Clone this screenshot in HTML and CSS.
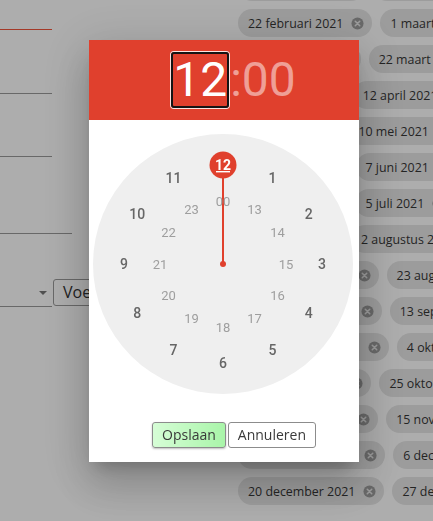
FILE: index.html
```html
<!DOCTYPE html>
<html lang="nl">
<head>
<meta charset="utf-8">
<title>Tijd kiezen</title>
<link rel="stylesheet" href="styles.css">
</head>
<body>
<div class="page">
  <div class="form">
    <div class="field field-focus"></div>
    <div class="field field-2"></div>
    <div class="field field-3"></div>
    <div class="field field-4 wide"></div>
    <div class="select-row">
      <div class="select"><span class="caret"></span></div>
      <button class="add-btn" type="button">Voeg toe</button>
    </div>
  </div>
  <div class="chips">
    <div class="chip-row">
      <span class="chip">1 februari 2021<svg class="x" viewBox="0 0 14 14"><circle cx="7" cy="7" r="6.5"/><path d="M4.6 4.6l4.8 4.8M9.4 4.6l-4.8 4.8"/></svg></span>
      <span class="chip">8 februari 2021<svg class="x" viewBox="0 0 14 14"><circle cx="7" cy="7" r="6.5"/><path d="M4.6 4.6l4.8 4.8M9.4 4.6l-4.8 4.8"/></svg></span>
    </div>
    <div class="chip-row">
      <span class="chip">22 februari 2021<svg class="x" viewBox="0 0 14 14"><circle cx="7" cy="7" r="6.5"/><path d="M4.6 4.6l4.8 4.8M9.4 4.6l-4.8 4.8"/></svg></span>
      <span class="chip">1 maart 2021<svg class="x" viewBox="0 0 14 14"><circle cx="7" cy="7" r="6.5"/><path d="M4.6 4.6l4.8 4.8M9.4 4.6l-4.8 4.8"/></svg></span>
    </div>
    <div class="chip-row">
      <span class="chip">15 maart 2021<svg class="x" viewBox="0 0 14 14"><circle cx="7" cy="7" r="6.5"/><path d="M4.6 4.6l4.8 4.8M9.4 4.6l-4.8 4.8"/></svg></span>
      <span class="chip">22 maart 2021<svg class="x" viewBox="0 0 14 14"><circle cx="7" cy="7" r="6.5"/><path d="M4.6 4.6l4.8 4.8M9.4 4.6l-4.8 4.8"/></svg></span>
    </div>
    <div class="chip-row">
      <span class="chip">5 april 2021<svg class="x" viewBox="0 0 14 14"><circle cx="7" cy="7" r="6.5"/><path d="M4.6 4.6l4.8 4.8M9.4 4.6l-4.8 4.8"/></svg></span>
      <span class="chip">12 april 2021<svg class="x" viewBox="0 0 14 14"><circle cx="7" cy="7" r="6.5"/><path d="M4.6 4.6l4.8 4.8M9.4 4.6l-4.8 4.8"/></svg></span>
    </div>
    <div class="chip-row">
      <span class="chip">3 mei 2021<svg class="x" viewBox="0 0 14 14"><circle cx="7" cy="7" r="6.5"/><path d="M4.6 4.6l4.8 4.8M9.4 4.6l-4.8 4.8"/></svg></span>
      <span class="chip">10 mei 2021<svg class="x" viewBox="0 0 14 14"><circle cx="7" cy="7" r="6.5"/><path d="M4.6 4.6l4.8 4.8M9.4 4.6l-4.8 4.8"/></svg></span>
    </div>
    <div class="chip-row">
      <span class="chip">31 mei 2021<svg class="x" viewBox="0 0 14 14"><circle cx="7" cy="7" r="6.5"/><path d="M4.6 4.6l4.8 4.8M9.4 4.6l-4.8 4.8"/></svg></span>
      <span class="chip">7 juni 2021<svg class="x" viewBox="0 0 14 14"><circle cx="7" cy="7" r="6.5"/><path d="M4.6 4.6l4.8 4.8M9.4 4.6l-4.8 4.8"/></svg></span>
    </div>
    <div class="chip-row">
      <span class="chip">28 juni 2021<svg class="x" viewBox="0 0 14 14"><circle cx="7" cy="7" r="6.5"/><path d="M4.6 4.6l4.8 4.8M9.4 4.6l-4.8 4.8"/></svg></span>
      <span class="chip">5 juli 2021<svg class="x" viewBox="0 0 14 14"><circle cx="7" cy="7" r="6.5"/><path d="M4.6 4.6l4.8 4.8M9.4 4.6l-4.8 4.8"/></svg></span>
    </div>
    <div class="chip-row">
      <span class="chip">26 juli 2021<svg class="x" viewBox="0 0 14 14"><circle cx="7" cy="7" r="6.5"/><path d="M4.6 4.6l4.8 4.8M9.4 4.6l-4.8 4.8"/></svg></span>
      <span class="chip">2 augustus 2021<svg class="x" viewBox="0 0 14 14"><circle cx="7" cy="7" r="6.5"/><path d="M4.6 4.6l4.8 4.8M9.4 4.6l-4.8 4.8"/></svg></span>
    </div>
    <div class="chip-row">
      <span class="chip">16 augustus 2021<svg class="x" viewBox="0 0 14 14"><circle cx="7" cy="7" r="6.5"/><path d="M4.6 4.6l4.8 4.8M9.4 4.6l-4.8 4.8"/></svg></span>
      <span class="chip">23 augustus 2021<svg class="x" viewBox="0 0 14 14"><circle cx="7" cy="7" r="6.5"/><path d="M4.6 4.6l4.8 4.8M9.4 4.6l-4.8 4.8"/></svg></span>
    </div>
    <div class="chip-row">
      <span class="chip">6 september 2021<svg class="x" viewBox="0 0 14 14"><circle cx="7" cy="7" r="6.5"/><path d="M4.6 4.6l4.8 4.8M9.4 4.6l-4.8 4.8"/></svg></span>
      <span class="chip">13 september 2021<svg class="x" viewBox="0 0 14 14"><circle cx="7" cy="7" r="6.5"/><path d="M4.6 4.6l4.8 4.8M9.4 4.6l-4.8 4.8"/></svg></span>
    </div>
    <div class="chip-row">
      <span class="chip">27 september 2021<svg class="x" viewBox="0 0 14 14"><circle cx="7" cy="7" r="6.5"/><path d="M4.6 4.6l4.8 4.8M9.4 4.6l-4.8 4.8"/></svg></span>
      <span class="chip">4 oktober 2021<svg class="x" viewBox="0 0 14 14"><circle cx="7" cy="7" r="6.5"/><path d="M4.6 4.6l4.8 4.8M9.4 4.6l-4.8 4.8"/></svg></span>
    </div>
    <div class="chip-row">
      <span class="chip">18 oktober 2021<svg class="x" viewBox="0 0 14 14"><circle cx="7" cy="7" r="6.5"/><path d="M4.6 4.6l4.8 4.8M9.4 4.6l-4.8 4.8"/></svg></span>
      <span class="chip">25 oktober 2021<svg class="x" viewBox="0 0 14 14"><circle cx="7" cy="7" r="6.5"/><path d="M4.6 4.6l4.8 4.8M9.4 4.6l-4.8 4.8"/></svg></span>
    </div>
    <div class="chip-row">
      <span class="chip">8 november 2021<svg class="x" viewBox="0 0 14 14"><circle cx="7" cy="7" r="6.5"/><path d="M4.6 4.6l4.8 4.8M9.4 4.6l-4.8 4.8"/></svg></span>
      <span class="chip">15 november 2021<svg class="x" viewBox="0 0 14 14"><circle cx="7" cy="7" r="6.5"/><path d="M4.6 4.6l4.8 4.8M9.4 4.6l-4.8 4.8"/></svg></span>
    </div>
    <div class="chip-row">
      <span class="chip">29 november 2021<svg class="x" viewBox="0 0 14 14"><circle cx="7" cy="7" r="6.5"/><path d="M4.6 4.6l4.8 4.8M9.4 4.6l-4.8 4.8"/></svg></span>
      <span class="chip">6 december 2021<svg class="x" viewBox="0 0 14 14"><circle cx="7" cy="7" r="6.5"/><path d="M4.6 4.6l4.8 4.8M9.4 4.6l-4.8 4.8"/></svg></span>
    </div>
    <div class="chip-row">
      <span class="chip">20 december 2021<svg class="x" viewBox="0 0 14 14"><circle cx="7" cy="7" r="6.5"/><path d="M4.6 4.6l4.8 4.8M9.4 4.6l-4.8 4.8"/></svg></span>
      <span class="chip">27 december 2021<svg class="x" viewBox="0 0 14 14"><circle cx="7" cy="7" r="6.5"/><path d="M4.6 4.6l4.8 4.8M9.4 4.6l-4.8 4.8"/></svg></span>
    </div>
  </div>
</div>

<div class="backdrop"></div>

<div class="dialog" role="dialog">
  <div class="dialog-header">
    <span class="hh">12</span><span class="sep">:</span><span class="mm">00</span>
  </div>
  <div class="clock">
    <svg class="clock-svg" viewBox="0 0 260 260" width="260" height="260">
      <circle class="face" cx="130" cy="130" r="130"/>
      <line class="hand" x1="130" y1="130" x2="130" y2="31"/>
      <circle class="dot" cx="130" cy="130" r="3"/>
      <g class="inner">
        <text x="130" y="67" dy="0.35em">00</text>
        <text x="161.5" y="75.44" dy="0.35em">13</text>
        <text x="184.56" y="98.5" dy="0.35em">14</text>
        <text x="193" y="130" dy="0.35em">15</text>
        <text x="184.56" y="161.5" dy="0.35em">16</text>
        <text x="161.5" y="184.56" dy="0.35em">17</text>
        <text x="130" y="193" dy="0.35em">18</text>
        <text x="98.5" y="184.56" dy="0.35em">19</text>
        <text x="75.44" y="161.5" dy="0.35em">20</text>
        <text x="67" y="130" dy="0.35em">21</text>
        <text x="75.44" y="98.5" dy="0.35em">22</text>
        <text x="98.5" y="75.44" dy="0.35em">23</text>
      </g>
      <g class="outer">
        <text x="179.5" y="44.26" dy="0.35em">1</text>
        <text x="215.74" y="80.5" dy="0.35em">2</text>
        <text x="229" y="130" dy="0.35em">3</text>
        <text x="215.74" y="179.5" dy="0.35em">4</text>
        <text x="179.5" y="215.74" dy="0.35em">5</text>
        <text x="130" y="229" dy="0.35em">6</text>
        <text x="80.5" y="215.74" dy="0.35em">7</text>
        <text x="44.26" y="179.5" dy="0.35em">8</text>
        <text x="31" y="130" dy="0.35em">9</text>
        <text x="44.26" y="80.5" dy="0.35em">10</text>
        <text x="80.5" y="44.26" dy="0.35em">11</text>
      </g>
      <circle class="sel" cx="130" cy="31" r="13.5"/>
      <text class="sel-text" x="130" y="31" dy="0.35em">12</text>
      <rect class="sel-line" x="123" y="37" width="14" height="1.4"/>
    </svg>
  </div>
  <div class="actions">
    <button class="btn btn-save" type="button">Opslaan</button>
    <button class="btn btn-cancel" type="button">Annuleren</button>
  </div>
</div>
</body>
</html>
```

FILE: styles.css
```css
html, body {
  margin: 0;
  padding: 0;
  background: #ffffff;
  overflow: hidden;
  width: 433px;
  height: 521px;
}

body {
  font-family: "Open Sans", "Noto Sans", sans-serif;
  color: #333;
}

.page {
  display: flex;
  align-items: flex-start;
  width: 700px;
}

/* ---- left form (underlying page) ---- */
.form {
  width: 238px;
  flex: none;
  display: flex;
  flex-direction: column;
}

.field {
  width: 52px;
  height: 29px;
  border-bottom: 1px solid #9a9a9a;
}

.field-focus {
  border-bottom-color: #f2553c;
}

.field-2 { margin-top: 34px; }
.field-3 { margin-top: 33px; }
.field-4 { margin-top: 47px; }
.field.wide { width: 72px; }

.select-row {
  margin-top: 45px;
  display: flex;
  align-items: flex-start;
  gap: 1px;
}

.select {
  width: 52px;
  height: 27px;
  border-bottom: 1px solid #9a9a9a;
  display: flex;
  align-items: center;
  justify-content: flex-end;
}

.caret {
  width: 0;
  height: 0;
  border-left: 4px solid transparent;
  border-right: 4px solid transparent;
  border-top: 4px solid #777;
  margin-right: 5px;
}

.add-btn {
  height: 27px;
  padding: 0 9px;
  border: 1px solid #9a9a9a;
  border-radius: 3px;
  background: #fff;
  font-family: "Open Sans", sans-serif;
  font-size: 16px;
  line-height: 25px;
  color: #333;
  white-space: nowrap;
}

/* ---- chips ---- */
.chips {
  margin-top: -27px;
  display: flex;
  flex-direction: column;
  gap: 8px;
}

.chip-row {
  display: flex;
  gap: 8px;
  flex-wrap: nowrap;
}

.chip {
  flex: none;
  display: inline-flex;
  align-items: center;
  gap: 8px;
  height: 28px;
  padding: 0 8px 0 10px;
  border-radius: 14px;
  background: #e6e6e6;
  font-size: 12.4px;
  color: #363636;
  white-space: nowrap;
}

.x {
  width: 13px;
  height: 13px;
  flex: none;
}

.x circle { fill: #9c9c9c; }
.x path { stroke: #e6e6e6; stroke-width: 1.7; fill: none; stroke-linecap: round; }

/* ---- overlay ---- */
.backdrop {
  position: fixed;
  inset: 0;
  background: rgba(0, 0, 0, 0.32);
}

.dialog {
  position: fixed;
  left: 89px;
  top: 40px;
  width: 270px;
  height: 422px;
  background: #fff;
  display: flex;
  flex-direction: column;
  box-shadow: 0 11px 15px -7px rgba(0, 0, 0, 0.2),
              0 24px 38px 3px rgba(0, 0, 0, 0.14),
              0 9px 46px 8px rgba(0, 0, 0, 0.12);
}

.dialog-header {
  height: 80px;
  flex: none;
  background: #e0402d;
  display: flex;
  align-items: center;
  justify-content: center;
  padding-left: 19px;
  font-family: Roboto, sans-serif;
  font-size: 48px;
  color: #fff;
}

.hh {
  display: inline-block;
  height: 52px;
  line-height: 52px;
  border: 2px solid #141414;
  border-radius: 3px;
  box-shadow: 0 0 0 1px rgba(255, 255, 255, 0.85);
}

.sep, .mm {
  color: rgba(255, 255, 255, 0.5);
  line-height: 52px;
}

.sep { padding-left: 1px; }

.clock {
  margin: 14px 0 0 4px;
  width: 260px;
  height: 260px;
}

.clock-svg {
  display: block;
}

.face { fill: #efefef; }

.hand {
  stroke: #e0402d;
  stroke-width: 2;
}

.dot { fill: #e0402d; }

.clock-svg text {
  font-family: Roboto, sans-serif;
  text-anchor: middle;
}

.outer text {
  font-size: 14px;
  font-weight: 500;
  fill: #666;
}

.inner text {
  font-size: 13px;
  fill: #9e9e9e;
}

.sel { fill: #e0402d; }

.sel-text {
  font-size: 14px;
  font-weight: 700;
  fill: #fff;
}

.sel-line { fill: #fff; }

.actions {
  margin-top: 28px;
  display: flex;
  justify-content: flex-end;
  padding-right: 43px;
  gap: 2px;
}

.btn {
  height: 26px;
  padding: 0 9px;
  border: 1px solid #8c8c8c;
  border-radius: 3px;
  font-family: "Open Sans", sans-serif;
  font-size: 14px;
  line-height: 24px;
  color: #3a3a3a;
}

.btn-save {
  background: linear-gradient(to right, #d6fdd6, #a9f5a9);
  box-shadow: 0 1px 2px rgba(0, 0, 0, 0.25);
}

.btn-cancel {
  background: #fff;
}
```
